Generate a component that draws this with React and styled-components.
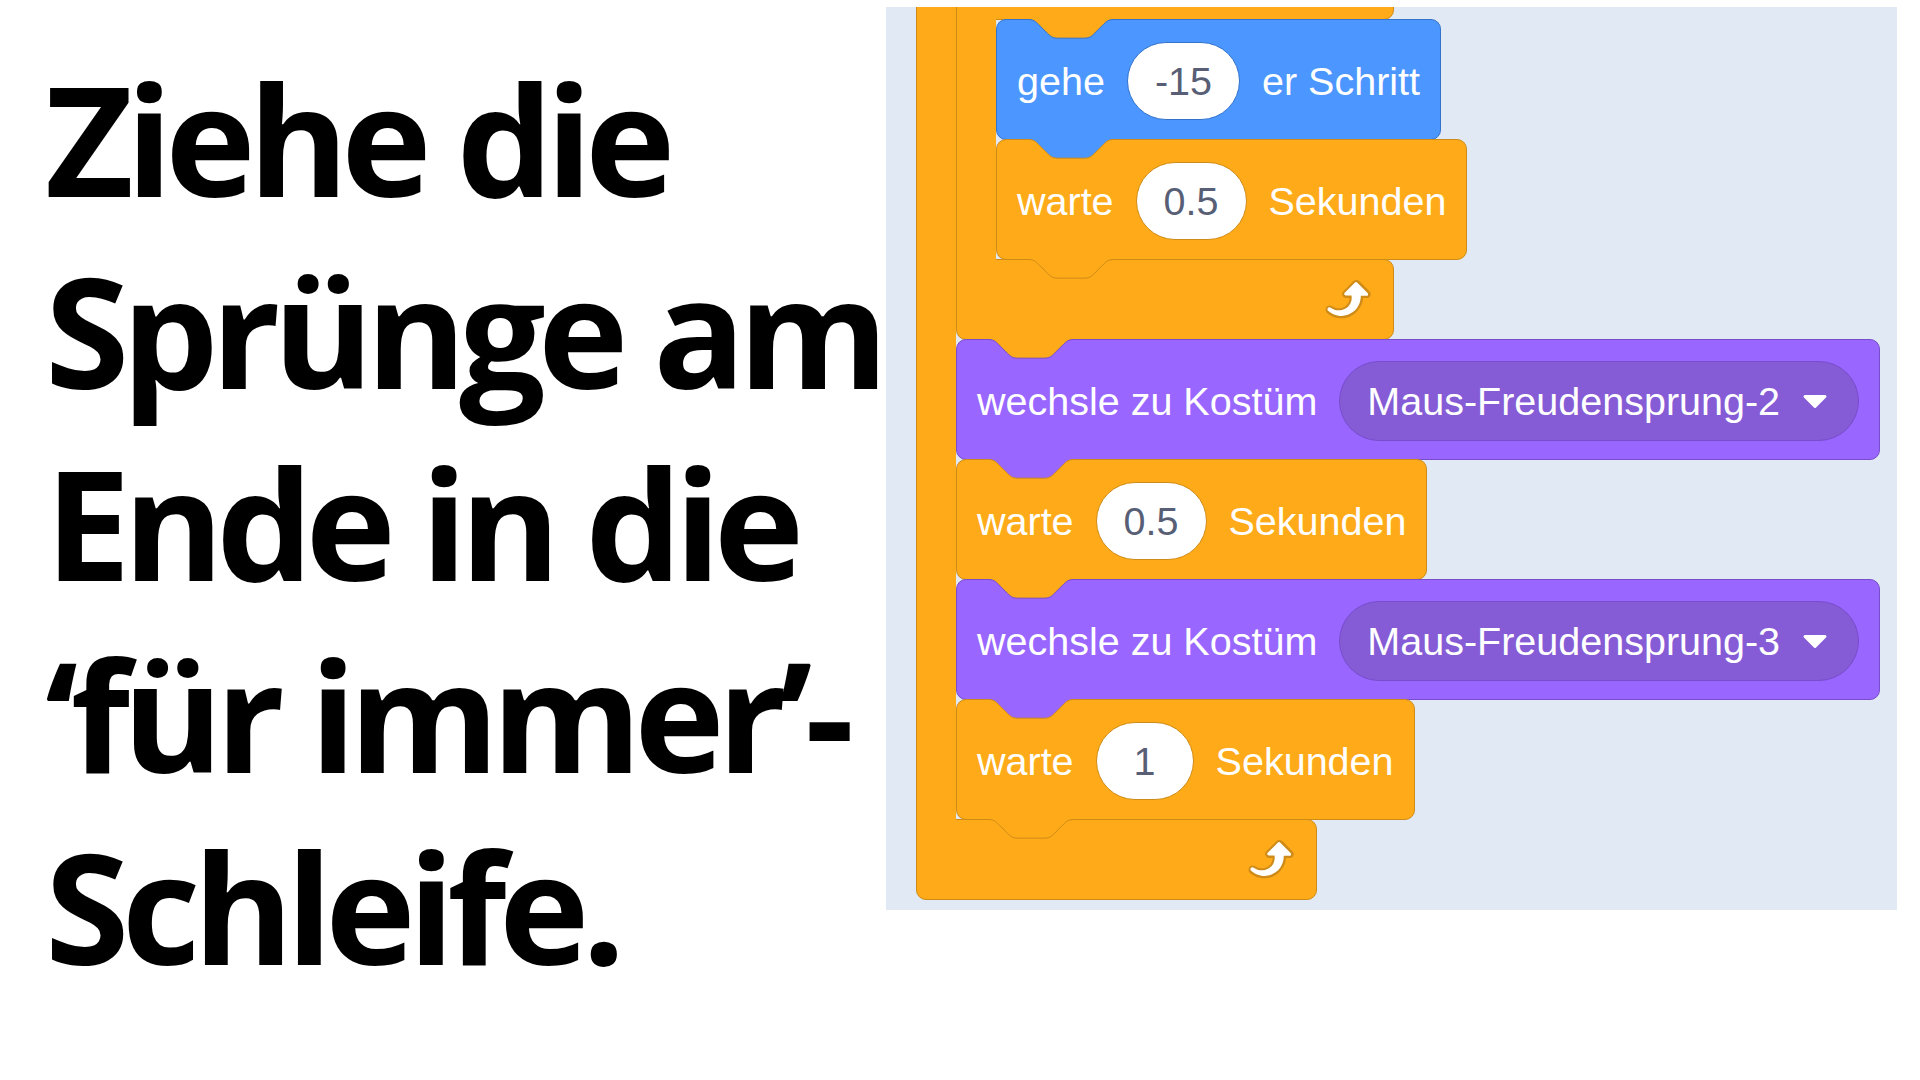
import React from "react";
import styled, { createGlobalStyle } from "styled-components";

const COLORS = {
  orange: { fill: "#ffab19", stroke: "#cf8b17" },
  blue: { fill: "#4c97ff", stroke: "#3373cc" },
  purple: { fill: "#9966ff", stroke: "#774dcb", field: "#855cd6" },
};

const GlobalStyle = createGlobalStyle`
  html, body { margin: 0; padding: 0; background: #ffffff; }
  body { width: 1920px; height: 1080px; overflow: hidden; }
`;

const Page = styled.main`
  display: flex;
  align-items: flex-start;
  width: 1920px;
  height: 1080px;
  background: #ffffff;
`;

const Headline = styled.h1`
  margin: 0;
  flex: 0 0 886px;
  min-width: 0;
  box-sizing: border-box;
  padding: 42px 0 0 45px;
  font-family: "Open Sans", "Noto Sans", "DejaVu Sans", sans-serif;
  font-weight: 700;
  font-size: 153px;
  line-height: 192px;
  letter-spacing: -7.5px;
  color: #000000;
  white-space: nowrap;
`;

const Workspace = styled.section`
  flex: 0 0 1011px;
  height: 903px;
  margin-top: 7px;
  background: #e0e9f4;
  overflow: hidden;
`;

const Script = styled.div`
  display: flex;
  flex-direction: column;
  align-items: flex-start;
  margin: -227px 0 0 30px;
`;

const Stack = styled.div`
  display: flex;
  flex-direction: column;
  align-items: flex-start;
`;

const BlockShell = styled.div`
  position: relative;
  box-sizing: border-box;
  display: flex;
  align-items: center;
  gap: 22px;
  height: 121px;
  margin-top: -1px;
  padding: 3px 20px 0 20px;
  background: ${(p) => p.$fill};
  border: 1px solid ${(p) => p.$stroke};
  border-radius: 10px;
  font-family: "Liberation Sans", Arial, sans-serif;
  font-size: 39.5px;
  color: #ffffff;
  white-space: nowrap;
`;

const Label = styled.span`
  display: inline-block;
`;

const Oval = styled.span`
  box-sizing: border-box;
  display: inline-flex;
  align-items: center;
  justify-content: center;
  height: 78px;
  min-width: 98px;
  padding: 0 27px;
  border-radius: 39px;
  background: #ffffff;
  border: 1px solid ${(p) => p.$stroke};
  color: #575e75;
`;

const Dropdown = styled.span`
  box-sizing: border-box;
  display: inline-flex;
  align-items: center;
  gap: 22px;
  height: 80px;
  padding: 0 30px 0 27px;
  border-radius: 40px;
  background: ${(p) => p.$fill};
  border: 1px solid ${(p) => p.$stroke};
  color: #ffffff;
`;

const Arrow = styled.svg`
  width: 26px;
  height: 15px;
  flex: 0 0 auto;
`;

const NotchSvg = styled.svg`
  position: absolute;
  top: -1px;
  left: ${(p) => p.$left}px;
  width: 86px;
  height: 21px;
  overflow: visible;
  pointer-events: none;
`;

const CWrap = styled.div`
  display: flex;
  flex-direction: column;
  align-items: flex-start;
  margin-top: -1px;
`;

const CTop = styled.div`
  position: relative;
  box-sizing: border-box;
  width: ${(p) => p.$width}px;
  height: 121px;
  background: ${(p) => p.$fill};
  border: 1px solid ${(p) => p.$stroke};
  border-radius: 10px 10px 10px 0;
`;

const CMiddle = styled.div`
  display: flex;
  align-items: stretch;
`;

const CArm = styled.div`
  position: relative;
  z-index: 1;
  box-sizing: border-box;
  flex: 0 0 40px;
  margin: -1px 0;
  background: ${(p) => p.$fill};
  border-left: 1px solid ${(p) => p.$stroke};
`;

const CBottom = styled.div`
  position: relative;
  box-sizing: border-box;
  display: flex;
  align-items: center;
  justify-content: flex-end;
  width: ${(p) => p.$width}px;
  height: 81px;
  margin-top: -1px;
  padding: 0 21px 4px 0;
  background: ${(p) => p.$fill};
  border: 1px solid ${(p) => p.$stroke};
  border-radius: 0 10px 10px 10px;
`;

const LoopSvg = styled.svg`
  width: 56px;
  height: 56px;
  flex: 0 0 auto;
`;

const NOTCH_CURVE =
  "c4.67,0 7,2.33 9.33,4.67 l9.33,9.33 c2.33,2.33 4.67,4.67 9.33,4.67 h28 c4.67,0 7,-2.33 9.33,-4.67 l9.33,-9.33 c2.33,-2.33 4.67,-4.67 9.33,-4.67";

function Notch({ left = 31, fill, stroke }) {
  return (
    <NotchSvg $left={left} viewBox="0 0 86 21">
      <path d={`M1,0.5 ${NOTCH_CURVE} V0 H1 Z`} fill={fill} />
      <path d={`M1,0.5 ${NOTCH_CURVE}`} fill="none" stroke={stroke} strokeWidth="1" />
    </NotchSvg>
  );
}

function LoopIcon() {
  return (
    <LoopSvg viewBox="0 0 24 24">
      <path
        fill="#cf8b17"
        d="M23.3,11c-0.3,0.6-0.9,1-1.5,1h-1.6c-0.1,1.3-0.5,2.5-1.1,3.6c-0.9,1.7-2.3,3.2-4.1,4.1c-1.7,0.9-3.6,1.2-5.5,0.9c-1.8-0.3-3.5-1.1-4.9-2.3c-0.7-0.7-0.7-1.9,0-2.6c0.6-0.6,1.6-0.7,2.3-0.2H7c0.9,0.6,1.9,0.9,2.9,0.9s1.9-0.3,2.7-0.9c1.1-0.8,1.8-2.1,1.8-3.5h-1.5c-0.9,0-1.7-0.7-1.7-1.7c0-0.4,0.2-0.9,0.5-1.2l4.4-4.4c0.7-0.6,1.7-0.6,2.4,0L23,9.2C23.5,9.7,23.6,10.4,23.3,11z"
      />
      <path
        fill="#ffffff"
        d="M21.8,11h-2.6c0,1.5-0.3,2.9-1,4.2c-0.8,1.6-2.1,2.8-3.7,3.6c-1.5,0.8-3.3,1.1-4.9,0.8c-1.6-0.2-3.2-1-4.4-2.1c-0.4-0.3-0.4-0.9-0.1-1.2c0.3-0.4,0.9-0.4,1.2-0.1l0,0c1,0.7,2.2,1.1,3.4,1.1s2.3-0.3,3.3-1c0.9-0.6,1.6-1.5,2-2.6c0.3-0.9,0.4-1.8,0.2-2.8h-2.4c-0.4,0-0.7-0.3-0.7-0.7c0-0.2,0.1-0.3,0.2-0.4l4.4-4.4c0.3-0.3,0.7-0.3,0.9,0L22,9.8c0.3,0.3,0.4,0.6,0.3,0.9S22,11,21.8,11z"
      />
    </LoopSvg>
  );
}

function DropArrow() {
  return (
    <Arrow viewBox="0 0 26 15">
      <path
        d="M3,2.5 H23 L13,12.5 Z"
        fill="#ffffff"
        stroke="#ffffff"
        strokeWidth="3"
        strokeLinejoin="round"
      />
    </Arrow>
  );
}

function Block({ color, notch, children }) {
  const c = COLORS[color];
  return (
    <BlockShell $fill={c.fill} $stroke={c.stroke}>
      {notch && <Notch fill={COLORS[notch].fill} stroke={c.stroke} />}
      {children}
    </BlockShell>
  );
}

function CBlock({ color = "orange", width, lastColor, children }) {
  const c = COLORS[color];
  return (
    <CWrap>
      <CTop $fill={c.fill} $stroke={c.stroke} $width={width} />
      <CMiddle>
        <CArm $fill={c.fill} $stroke={c.stroke} />
        <Stack>{children}</Stack>
      </CMiddle>
      <CBottom $fill={c.fill} $stroke={c.stroke} $width={width}>
        <Notch left={71} fill={COLORS[lastColor].fill} stroke={c.stroke} />
        <LoopIcon />
      </CBottom>
    </CWrap>
  );
}

function Wait({ value, notch }) {
  return (
    <Block color="orange" notch={notch}>
      <Label>warte</Label>
      <Oval $stroke={COLORS.orange.stroke}>{value}</Oval>
      <Label>Sekunden</Label>
    </Block>
  );
}

function Costume({ name, notch }) {
  return (
    <Block color="purple" notch={notch}>
      <Label>wechsle zu Kostüm</Label>
      <Dropdown $fill={COLORS.purple.field} $stroke={COLORS.purple.stroke}>
        <Label>{name}</Label>
        <DropArrow />
      </Dropdown>
    </Block>
  );
}

export default function App() {
  return (
    <>
      <GlobalStyle />
      <Page>
        <Headline>
          Ziehe die
          <br />
          Sprünge am
          <br />
          Ende in die
          <br />
          ‘für immer’-
          <br />
          Schleife.
        </Headline>
        <Workspace>
          <Script>
            <CBlock width={401} lastColor="orange">
              <CBlock width={438} lastColor="orange">
                <Block color="blue" notch="orange">
                  <Label>gehe</Label>
                  <Oval $stroke={COLORS.blue.stroke}>-15</Oval>
                  <Label>er Schritt</Label>
                </Block>
                <Wait value="0.5" notch="blue" />
              </CBlock>
              <Costume name="Maus-Freudensprung-2" notch="orange" />
              <Wait value="0.5" notch="purple" />
              <Costume name="Maus-Freudensprung-3" notch="orange" />
              <Wait value="1" notch="purple" />
            </CBlock>
          </Script>
        </Workspace>
      </Page>
    </>
  );
}
